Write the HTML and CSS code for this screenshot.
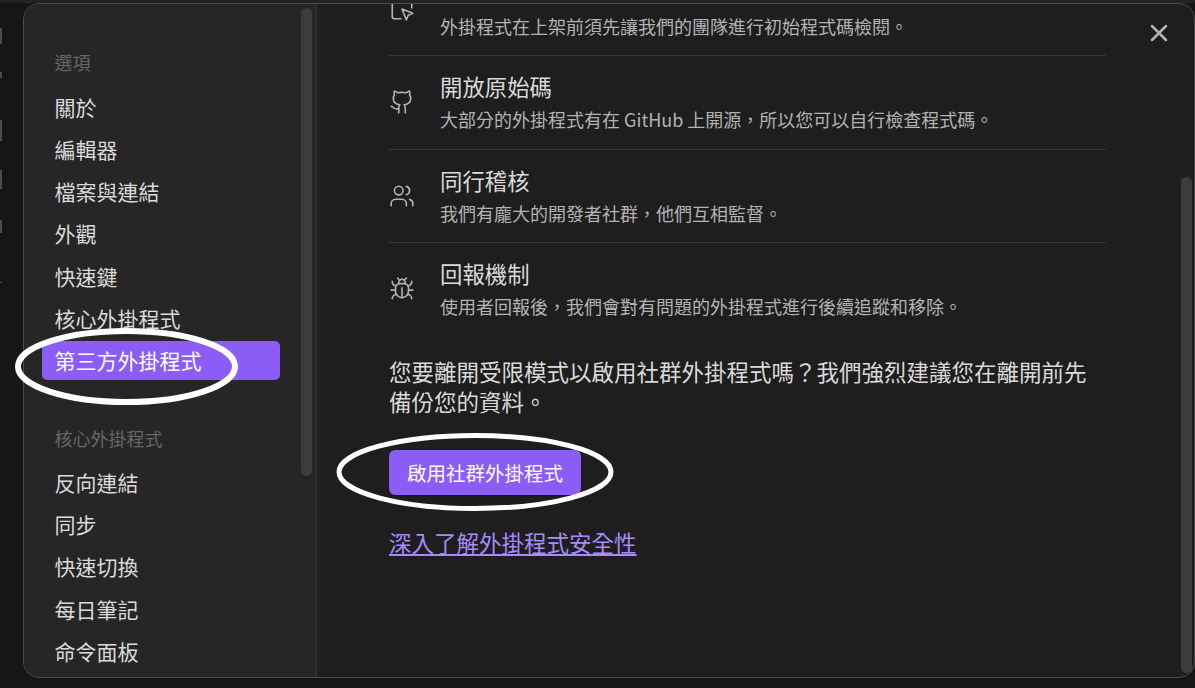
FILE: index.html
```html
<!DOCTYPE html>
<html lang="zh-Hant">
<head>
<meta charset="utf-8">
<title>設定</title>
<link rel="stylesheet" href="styles.css">
</head>
<body>
<div class="topstrip"></div>
<div class="rail">
  <span class="rail-mark m1"></span>
  <span class="rail-mark m2"></span>
  <span class="rail-mark m3"></span>
  <span class="rail-mark m4"></span>
  <span class="rail-mark m5"></span>
  <span class="rail-mark m6"></span>
</div>
<div class="modal">
  <aside class="side">
    <div class="side-scroll">
      <h3 class="group">選項</h3>
      <a class="item">關於</a>
      <a class="item">編輯器</a>
      <a class="item">檔案與連結</a>
      <a class="item">外觀</a>
      <a class="item">快速鍵</a>
      <a class="item">核心外掛程式</a>
      <a class="item active">第三方外掛程式</a>
      <h3 class="group second">核心外掛程式</h3>
      <a class="item">反向連結</a>
      <a class="item">同步</a>
      <a class="item">快速切換</a>
      <a class="item">每日筆記</a>
      <a class="item">命令面板</a>
    </div>
    <div class="thumb side-thumb"></div>
  </aside>
  <main class="content">
    <div class="inner">
      <div class="row first">
        <svg class="ico" viewBox="0 0 24 24"><path d="M21 11V5a2 2 0 0 0-2-2H5a2 2 0 0 0-2 2v14a2 2 0 0 0 2 2h6"/><path d="m12 12 4 10 1.700-4.300L22 16Z"/></svg>
        <div class="row-text">
          <div class="row-title">通過團隊的審查</div>
          <div class="row-desc">外掛程式在上架前須先讓我們的團隊進行初始程式碼檢閱。</div>
        </div>
      </div>
      <div class="row">
        <svg class="ico" viewBox="0 0 24 24"><path d="M15 22v-4a4.800 4.800 0 0 0-1-3.500c3 0 6-2 6-5.500.08-1.250-.27-2.480-1-3.500.28-1.150.28-2.350 0-3.500 0 0-1 0-3 1.500-2.640-.5-5.360-.5-8 0C6 2 5 2 5 2c-.3 1.150-.3 2.350 0 3.500A5.403 5.403 0 0 0 4 9c0 3.500 3 5.500 6 5.500-.39.49-.68 1.050-.85 1.650-.17.6-.22 1.230-.15 1.850v4"/><path d="M9 18c-4.510 2-5-2-7-2"/></svg>
        <div class="row-text">
          <div class="row-title">開放原始碼</div>
          <div class="row-desc">大部分的外掛程式有在 GitHub 上開源&#xFF0C;所以您可以自行檢查程式碼。</div>
        </div>
      </div>
      <div class="row">
        <svg class="ico" viewBox="0 0 24 24"><path d="M16 21v-2a4 4 0 0 0-4-4H6a4 4 0 0 0-4 4v2"/><circle cx="9" cy="7" r="4"/><path d="M22 21v-2a4 4 0 0 0-3-3.870"/><path d="M16 3.130a4 4 0 0 1 0 7.750"/></svg>
        <div class="row-text">
          <div class="row-title">同行稽核</div>
          <div class="row-desc">我們有龐大的開發者社群&#xFF0C;他們互相監督。</div>
        </div>
      </div>
      <div class="row">
        <svg class="ico" viewBox="0 0 24 24"><path d="m8 2 1.880 1.880"/><path d="M14.120 3.880 16 2"/><path d="M9 7.130v-1a3.003 3.003 0 1 1 6 0v1"/><path d="M12 20c-3.300 0-6-2.700-6-6v-3a4 4 0 0 1 4-4h4a4 4 0 0 1 4 4v3c0 3.300-2.700 6-6 6"/><path d="M12 20v-9"/><path d="M6.530 9C4.600 8.800 3 7.100 3 5"/><path d="M6 13H2"/><path d="M3 21c0-2.100 1.700-3.900 3.800-4"/><path d="M20.970 5c0 2.100-1.600 3.800-3.500 4"/><path d="M22 13h-4"/><path d="M17.200 17c2.100.1 3.800 1.900 3.800 4"/></svg>
        <div class="row-text">
          <div class="row-title">回報機制</div>
          <div class="row-desc">使用者回報後&#xFF0C;我們會對有問題的外掛程式進行後續追蹤和移除。</div>
        </div>
      </div>
      <p class="ask">您要離開受限模式以啟用社群外掛程式嗎&#xFF1F;我們強烈建議您在離開前先備份您的資料。</p>
      <button class="cta">啟用社群外掛程式</button>
      <a class="more">深入了解外掛程式安全性</a>
    </div>
    <div class="thumb main-thumb"></div>
  </main>
  <button class="close" aria-label="關閉"><svg viewBox="0 0 24 24"><path d="M18 6 6 18M6 6l12 12"/></svg></button>
</div>
<svg class="marks" viewBox="0 0 1195 688">
  <ellipse class="mark-nav" cx="126.500" cy="366.500" rx="108.500" ry="35.500"/>
  <ellipse class="mark-cta" cx="475" cy="472" rx="136" ry="36.500"/>
</svg>
</body>
</html>
```
FILE: styles.css
```css
* { box-sizing: border-box; }
html, body { margin: 0; height: 100%; }
body {
  background: #161616;
  overflow: hidden;
  font-family: "Noto Sans CJK TC", "Noto Sans", sans-serif;
  color: #dadada;
}
.topstrip { height: 3px; background: #232323; }
.rail { position: absolute; left: 0; top: 0; width: 3px; height: 100%; }
.rail-mark { position: absolute; left: 0; width: 2px; background: #4c4c4c; }
.m1 { top: 28px; height: 16px; }
.m2 { top: 72px; height: 6px; }
.m3 { top: 120px; height: 21px; }
.m4 { top: 170px; height: 19px; }
.m5 { top: 220px; height: 13px; }
.m6 { top: 282px; height: 1px; }
.modal {
  position: absolute;
  left: 23px;
  top: 3px;
  width: 1172px;
  height: 675px;
  display: flex;
  background: #1e1e1e;
  border: 1px solid #4a4a4a;
  border-radius: 16px;
  overflow: hidden;
}
.side {
  position: relative;
  width: 293px;
  flex: none;
  background: #262626;
  border-right: 1px solid #363636;
  overflow: hidden;
}
.side-scroll { padding: 45px 36px 0 18px; }
.group {
  margin: 0 0 12px;
  padding-left: 12.500px;
  font-size: 18px;
  line-height: 26px;
  font-weight: 400;
  color: #666;
}
.group.second { margin-top: 45px; margin-bottom: 11.500px; }
.item {
  display: flex;
  align-items: center;
  height: 39px;
  margin-bottom: 3.300px;
  padding-left: 12.500px;
  border-radius: 5px;
  font-size: 21px;
  color: #dadada;
}
.item.active { background: #8b5cf6; color: #fff; }
.thumb {
  position: absolute;
  width: 11px;
  background: #3c3c3c;
  border-radius: 6px;
}
.side-thumb { right: 4px; top: 4px; height: 468px; }
.content { position: relative; flex: 1; min-width: 0; overflow: hidden; }
.inner { width: 717px; margin-left: 72px; margin-top: -42px; }
.row {
  display: flex;
  align-items: center;
  height: 93.500px;
  border-top: 1px solid #363636;
}
.row.first { border-top: 0; height: 93px; }
.first .row-title { margin-top: -3px; margin-bottom: 3px; }
.ico {
  width: 26px;
  height: 26px;
  flex: none;
  margin-right: 25px;
  fill: none;
  stroke: #b3b3b3;
  stroke-width: 1.500;
  stroke-linecap: round;
  stroke-linejoin: round;
}
.row-text { padding-bottom: 3px; }
.row-title { font-size: 22.400px; line-height: 37px; color: #dadada; white-space: nowrap; }
.row-desc { font-size: 18px; line-height: 28px; color: #b3b3b3; white-space: nowrap; }
.ask { margin: 20.500px 0 0; font-size: 22.500px; line-height: 30px; color: #dadada; }
.cta {
  display: block;
  margin-top: 34px;
  width: 192px;
  height: 45px;
  border: 0;
  border-radius: 6px;
  background: #8b5cf6;
  color: #fff;
  font: inherit;
  font-size: 19.500px;
  font-weight: 400;
  padding: 0;
  white-space: nowrap;
  box-shadow: 0 1px 2px rgba(0, 0, 0, 0.4);
}
.more {
  display: block;
  width: fit-content;
  margin-top: 30.500px;
  font-size: 22.500px;
  line-height: 33px;
  color: #a78bfa;
  text-decoration: underline;
}
.main-thumb { right: 2px; top: 173px; bottom: 4px; }
.close {
  position: absolute;
  top: 15px;
  right: 21px;
  width: 28px;
  height: 28px;
  padding: 0;
  border: 0;
  background: none;
}
.close svg { display: block; width: 28px; height: 28px; fill: none; stroke: #b3b3b3; stroke-width: 2.200; stroke-linecap: round; }
.marks {
  position: absolute;
  left: 0;
  top: 0;
  width: 1195px;
  height: 688px;
  fill: none;
  stroke: #fff;
  pointer-events: none;
}
.mark-nav { stroke-width: 6; }
.mark-cta { stroke-width: 5; }
```
